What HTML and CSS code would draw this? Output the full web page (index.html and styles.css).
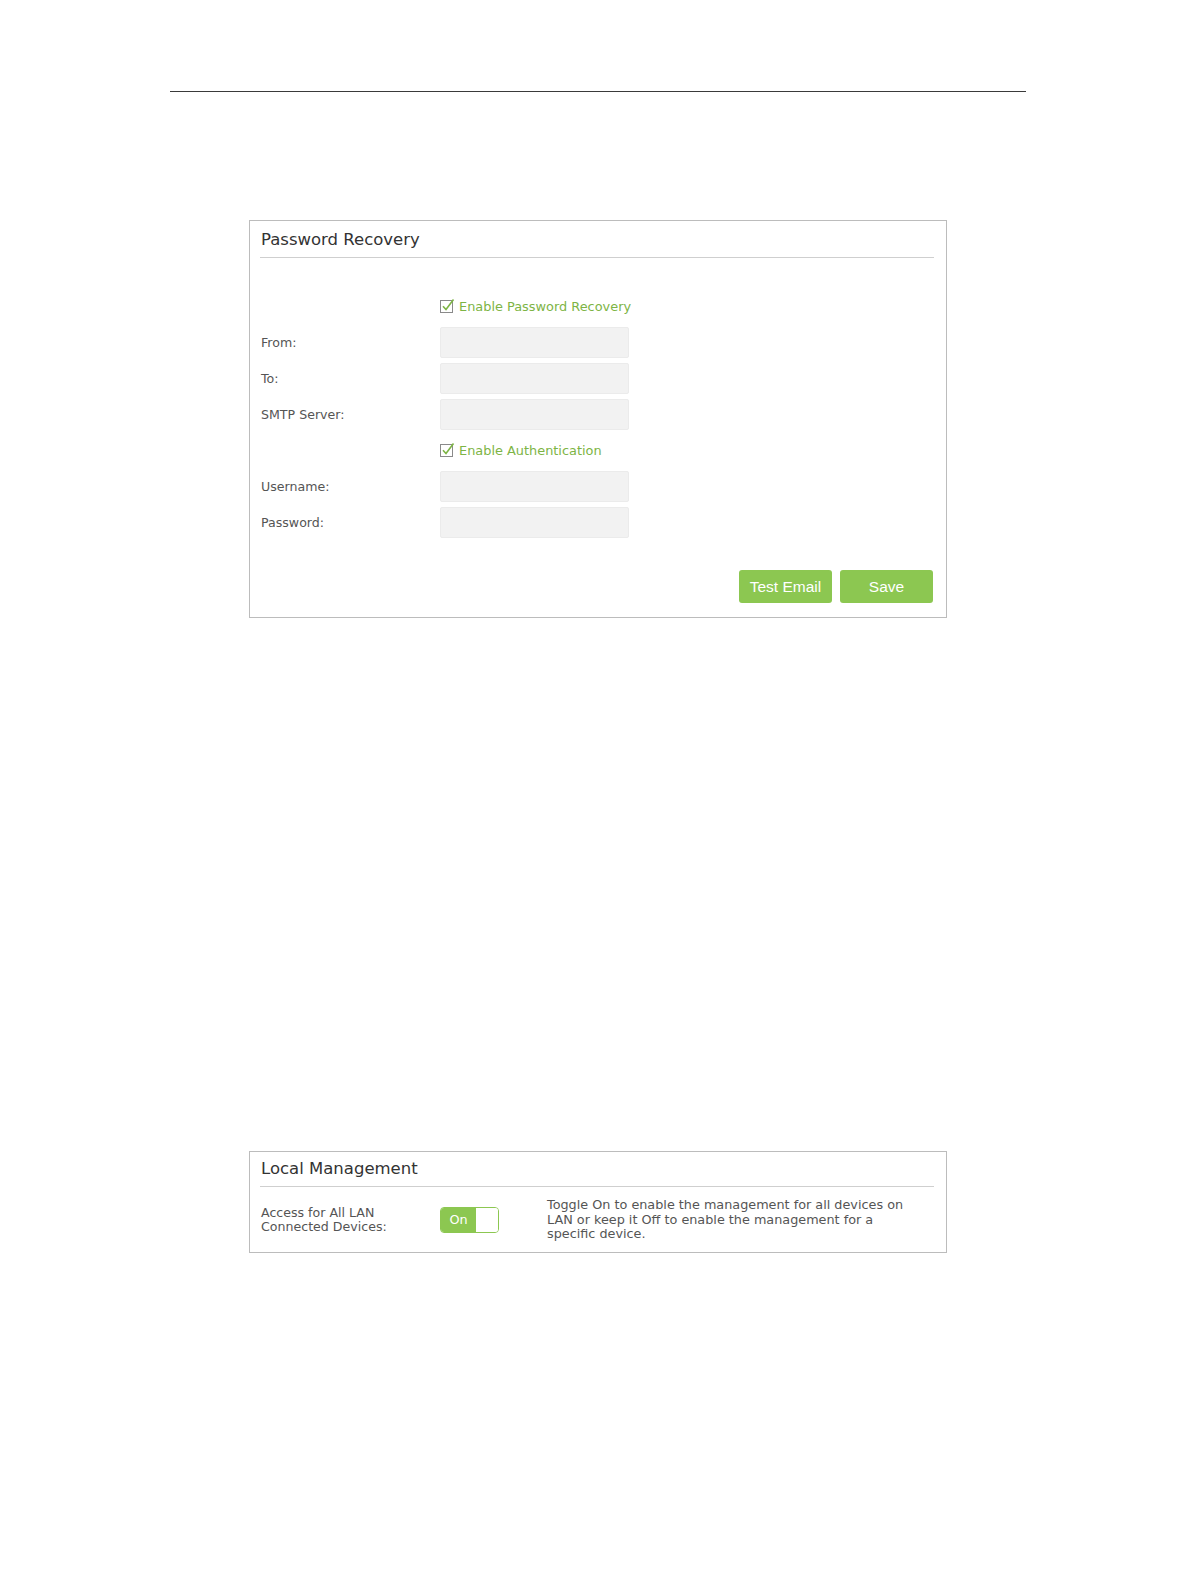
FILE: index.html
```html
<!DOCTYPE html>
<html lang="en">
<head>
    <meta charset="UTF-8">
    <meta name="viewport" content="width=device-width, initial-scale=1.0">
    <title>Password Recovery</title>
    <link rel="stylesheet" href="styles.css">
</head>
<body>

<div class="page-rule"></div>

<div class="panel recovery">
    <div class="panel-title">Password Recovery</div>
    <div class="form">
        <div class="row">
            <span class="label"></span>
            <label class="check">
                <svg class="check-icon" width="15" height="15" viewBox="0 0 15 15">
                    <rect x="0.5" y="2.5" width="12" height="12" fill="none" stroke="#8a8a8a" stroke-width="1"/>
                    <path d="M3 8.2 L6 11.5 L13.5 1.5" fill="none" stroke="#7db445" stroke-width="1.6"/>
                </svg>
                Enable Password Recovery
            </label>
        </div>
        <div class="row">
            <label class="label" for="from">From:</label>
            <input type="text" id="from">
        </div>
        <div class="row">
            <label class="label" for="to">To:</label>
            <input type="text" id="to">
        </div>
        <div class="row">
            <label class="label" for="smtp">SMTP Server:</label>
            <input type="text" id="smtp">
        </div>
        <div class="row">
            <span class="label"></span>
            <label class="check">
                <svg class="check-icon" width="15" height="15" viewBox="0 0 15 15">
                    <rect x="0.5" y="2.5" width="12" height="12" fill="none" stroke="#8a8a8a" stroke-width="1"/>
                    <path d="M3 8.2 L6 11.5 L13.5 1.5" fill="none" stroke="#7db445" stroke-width="1.6"/>
                </svg>
                Enable Authentication
            </label>
        </div>
        <div class="row">
            <label class="label" for="username">Username:</label>
            <input type="text" id="username">
        </div>
        <div class="row">
            <label class="label" for="password">Password:</label>
            <input type="password" id="password">
        </div>
    </div>
    <div class="actions">
        <button type="button">Test Email</button>
        <button type="button">Save</button>
    </div>
</div>

<div class="panel local">
    <div class="panel-title">Local Management</div>
    <div class="toggle-row">
        <div class="label wrap">Access for All LAN Connected Devices:</div>
        <div class="toggle">
            <span class="toggle-on">On</span>
            <span class="toggle-knob"></span>
        </div>
        <p class="note">Toggle On to enable the management for all devices on LAN or keep it Off to enable the management for a specific device.</p>
    </div>
</div>

</body>
</html>
```

FILE: styles.css
```css
body {
    margin: 0;
    font-family: "DejaVu Sans", Verdana, sans-serif;
    color: #555;
    background: #fff;
}
.page-rule {
    width: 856px;
    margin: 91px auto 0;
    border-top: 1px solid #3a3a3a;
}
.panel {
    width: 698px;
    box-sizing: border-box;
    margin: 0 auto;
    border: 1px solid #bcbcbc;
    padding: 0 12px 0 10px;
}
.recovery {
    margin-top: 128px;
    padding-bottom: 14px;
}
.local {
    margin-top: 533px;
}
.panel-title {
    font-size: 16.5px;
    line-height: 20px;
    color: #333;
    padding: 9px 0 7px 1px;
    border-bottom: 1px solid #cfcfcf;
}
.local .panel-title {
    padding-top: 7px;
}
.form {
    display: flex;
    flex-direction: column;
    gap: 5px;
    margin-top: 33px;
}
.row {
    display: flex;
    align-items: center;
    height: 31px;
}
.label {
    width: 180px;
    padding-left: 1px;
    box-sizing: border-box;
    font-size: 12.6px;
    color: #555;
    flex-shrink: 0;
}
.check {
    display: flex;
    align-items: center;
    gap: 4px;
    font-size: 12.9px;
    color: #7db445;
}
.check-icon {
    margin-top: -3px;
}
input {
    width: 189px;
    height: 31px;
    box-sizing: border-box;
    background: #f2f2f2;
    border: 1px solid #ebebeb;
    border-radius: 2px;
    padding: 4px 8px;
    font-family: inherit;
    font-size: 12.6px;
}
.actions {
    display: flex;
    justify-content: flex-end;
    gap: 8px;
    margin-top: 32px;
    padding-right: 1px;
}
button {
    width: 93px;
    height: 33px;
    background-color: #8cc751;
    color: #fff;
    border: none;
    border-radius: 3px;
    font-family: "Liberation Sans", Arial, sans-serif;
    font-size: 15.5px;
    cursor: pointer;
}
.toggle-row {
    display: flex;
    align-items: center;
    padding: 11px 0 10px;
}
.wrap {
    padding-right: 30px;
    line-height: 14.5px;
    margin-top: 1px;
}
.toggle {
    display: flex;
    width: 59px;
    height: 26px;
    box-sizing: border-box;
    border: 1.5px solid #8cc751;
    border-radius: 4px;
    overflow: hidden;
    flex-shrink: 0;
}
.toggle-on {
    width: 35px;
    background: #8cc751;
    color: #fff;
    font-size: 12.8px;
    line-height: 23px;
    text-align: center;
}
.toggle-knob {
    flex: 1;
    background: #fff;
}
.note {
    margin: 0 0 0 48px;
    width: 366px;
    font-size: 12.8px;
    line-height: 14.5px;
    color: #555;
}
```
